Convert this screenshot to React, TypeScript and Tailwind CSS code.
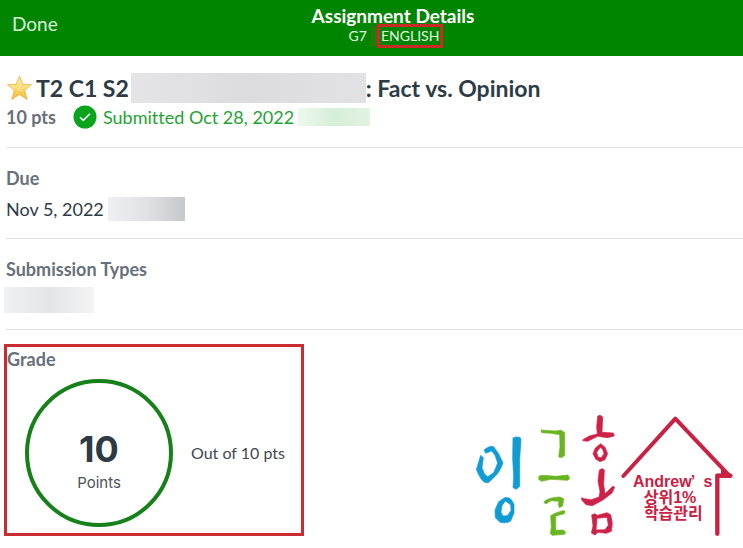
import type { ReactNode } from "react";

function Redacted({ className }: { className: string }) {
  return <span aria-hidden="true" className={`block shrink-0 ${className}`} />;
}

function StarIcon() {
  return (
    <svg viewBox="0 0 26 26" className="h-[26px] w-[26px] shrink-0" aria-hidden="true">
      <defs>
        <linearGradient id="star" x1="0" y1="0" x2="0" y2="1">
          <stop offset="0" stopColor="#fbe99a" />
          <stop offset="0.5" stopColor="#fbdc74" />
          <stop offset="1" stopColor="#f3ad1d" />
        </linearGradient>
      </defs>
      <path
        d="M13.500 1 16.800 9.200 25.600 9.700 18.700 15.300 21.100 24.500 13.500 19.500 5.700 24.500 8.300 15.300 1.400 9.700 10.200 9.200Z"
        fill="url(#star)"
        stroke="#e5b451"
        strokeWidth="0.8"
        strokeLinejoin="round"
      />
      <path d="M13.500 4v10M13.500 14 4 10.500M13.500 14l10-3.500M13.500 14l6 8M13.500 14l-6 8" stroke="#fff3bd" strokeWidth="0.7" opacity="0.6" />
    </svg>
  );
}

function CheckIcon() {
  return (
    <svg viewBox="0 0 24 24" className="h-6 w-6 shrink-0" aria-hidden="true">
      <circle cx="12" cy="12" r="11.500" fill="#08a51c" />
      <path d="M7 12.200 10.300 15.400 17 8.700" fill="none" stroke="#fff" strokeWidth="1.500" />
    </svg>
  );
}

function BrandLogo() {
  return (
    <svg
      viewBox="24 24 786 384"
      className="mt-[69px] h-[128px] w-[262px] shrink-0"
      role="img"
      aria-label="잉글홈 Andrew’s 상위1% 학습관리"
    >
      <g fill="#109bd3" stroke="#109bd3" strokeWidth="2" strokeLinejoin="round" fillRule="evenodd">
        <path d="M57 135Q73 121 86 125L101 146 114 174Q104 203 86 218L72 232Q57 237 46 218L34 194 41 171 47 151 55 158 51 188 58 206 68 215 86 203 98 174 90 151 80 138 62 145Z" />
        <path d="M144 99 152 96 165 97 168 104 164 163 164 244 154 253 144 248 146 217 143 158Z" />
        <path d="M119 278Q130 275 139 284L147 298 147 324 137 348Q124 356 105 352L91 338 90 315 101 290ZM121 288 111 302 108 322 114 333 127 332 138 317 137 299Z" />
      </g>
      <g fill="#68b51f" stroke="#68b51f" strokeWidth="2" strokeLinejoin="round">
        <path d="M228 75 270 78 289 76 299 83 299 151Q290 162 281 155L285 125 284 89 258 85 230 83Z" />
        <path d="M222 213 234 211 273 214 309 210 314 221 308 226 257 223 229 229 221 223Z" />
        <path d="M236 291Q249 277 285 276L296 281 293 303 283 308 280 298 282 289 258 287 242 297Z" />
        <path d="M293 317 300 318 298 326 272 333 272 376 294 375 302 381 299 388 261 391 256 386 259 367 257 332 270 325Z" />
      </g>
      <g fill="#ce2148" stroke="#ce2148" strokeWidth="2" strokeLinejoin="round" fillRule="evenodd">
        <path d="M398 34Q405 27 413 36L411 82 445 84 448 93 427 98 398 94 368 109 353 107 355 103 373 93 397 87 395 65Z" />
        <path d="M407 116 420 127 428 146 420 164 405 170 392 162 384 146 391 129ZM406 127 395 142 399 156 409 158 417 146 413 133Z" />
        <path d="M403 195Q412 187 418 195L416 238 420 266 444 243 449 247 441 264 414 285 382 302 363 299 350 285 350 278 358 281 379 284 402 276 405 260 399 228Z" />
        <path d="M380 330 389 326 397 331 426 323 437 329 442 355 439 379 424 385 399 382 390 390 379 384 384 363ZM396 340 393 375 420 374 430 361 426 337Z" />
      </g>
      <g fill="none" stroke="#c92143" strokeLinecap="round" strokeLinejoin="round">
        <path d="M475 213 631 41 793 212" strokeWidth="12" />
        <path d="M796 212H757V386" strokeWidth="13" />
      </g>
      <path d="M768 190 803 211 797 219 752 218 752 207 768 206Z" fill="#c92143" />
      <g
        fill="#c92143"
        className="font-['Liberation_Sans','Noto_Sans_CJK_KR',sans-serif] font-bold"
        textAnchor="middle"
      >
        <text x="592" y="245" fontSize="48">Andrew</text>
        <text x="684" y="245" fontSize="48">’</text>
        <text x="729" y="245" fontSize="48">s</text>
        <text x="615" y="293" fontSize="48">상위1%</text>
        <text x="625" y="343" fontSize="48">학습관리</text>
      </g>
    </svg>
  );
}

function Section({ title, children }: { title: string; children: ReactNode }) {
  return (
    <section className="ml-0.5 border-b border-[#e1e2e3] pt-4 pb-4">
      <h2 className="text-[18px] leading-7 font-bold text-[#66707a]">{title}</h2>
      {children}
    </section>
  );
}

export default function App() {
  return (
    <div className="min-h-screen bg-white font-['Lato',sans-serif] text-[#2d3b45] [font-variant-ligatures:none]">
      <header className="flex h-14 items-start bg-[#008500] text-white">
        <button type="button" className="w-[71px] px-3 pt-2.5 text-left text-[19px] leading-7 text-[#d9f2d9]">
          Done
        </button>
        <div className="flex flex-1 flex-col items-center pt-1 pr-7">
          <h1 className="text-[19px] leading-6 font-bold">Assignment Details</h1>
          <p className="-mt-1 flex items-center pl-1.5 text-[14px] leading-[18px] text-[#e2f5e2]">
            G7
            <Redacted className="ml-1 h-5 w-1.5 bg-[#267a0b]" />
            <span className="border-3 border-[#c92a26] px-px">ENGLISH</span>
          </p>
        </div>
      </header>

      <main className="pl-1">
        <section className="ml-0.5 border-b border-[#e1e2e3] pt-[17px] pb-4">
          <h2 className="flex h-[30px] items-center text-[23px] font-bold whitespace-nowrap">
            <StarIcon />
            <span className="ml-1">T2 C1 S2</span>
            <Redacted className="ml-0.5 h-[30px] w-[235px] bg-linear-to-r from-[#e5e5e7] via-[#dcdcde] to-[#e2e2e4]" />
            <span>: Fact vs. Opinion</span>
          </h2>
          <div className="flex h-7 items-center text-[18px] whitespace-nowrap">
            <span className="w-[67px] font-bold text-[#66707a]">10 pts</span>
            <CheckIcon />
            <span className="ml-1.5 text-[#24a334]">Submitted Oct 28, 2022</span>
            <Redacted className="ml-1 h-[18px] w-[72px] bg-linear-to-r from-[#eef8ee] via-[#d5efd8] to-[#e1f3e2]" />
          </div>
        </section>

        <Section title="Due">
          <div className="mt-1 flex h-[26px] items-center text-[18px]">
            <span>Nov 5, 2022</span>
            <Redacted className="ml-1 h-6 w-[77px] bg-linear-to-r from-[#eeeff0] via-[#e1e2e3] to-[#c6c7c9]" />
          </div>
        </Section>

        <Section title="Submission Types">
          <div className="mt-1 -ml-0.5 flex h-[26px] items-center">
            <Redacted className="h-[26px] w-[90px] bg-linear-to-r from-[#f0f1f2] via-[#e4e5e7] to-[#f3f3f4]" />
          </div>
        </Section>

        <div className="flex items-start justify-between pt-3.5 pr-2">
          <section className="h-[192px] w-[300px] shrink-0 border-3 border-[#ca2c33]">
            <h2 className="h-8 text-[18px] leading-6 font-bold text-[#66707a]">Grade</h2>
            <div className="flex items-center gap-[18px] pl-[18px]">
              <div className="flex h-[148px] w-[148px] flex-col items-center rounded-full border-4 border-[#168019] pt-[44px]">
                <span className="font-['Inter',sans-serif] text-[36px] leading-11 font-bold">10</span>
                <span className="font-['Inter',sans-serif] text-[15px] leading-6 text-[#4b5359]">Points</span>
              </div>
              <p className="text-[16px] text-[#3f494f]">Out of 10 pts</p>
            </div>
          </section>
          <BrandLogo />
        </div>
      </main>
    </div>
  );
}
